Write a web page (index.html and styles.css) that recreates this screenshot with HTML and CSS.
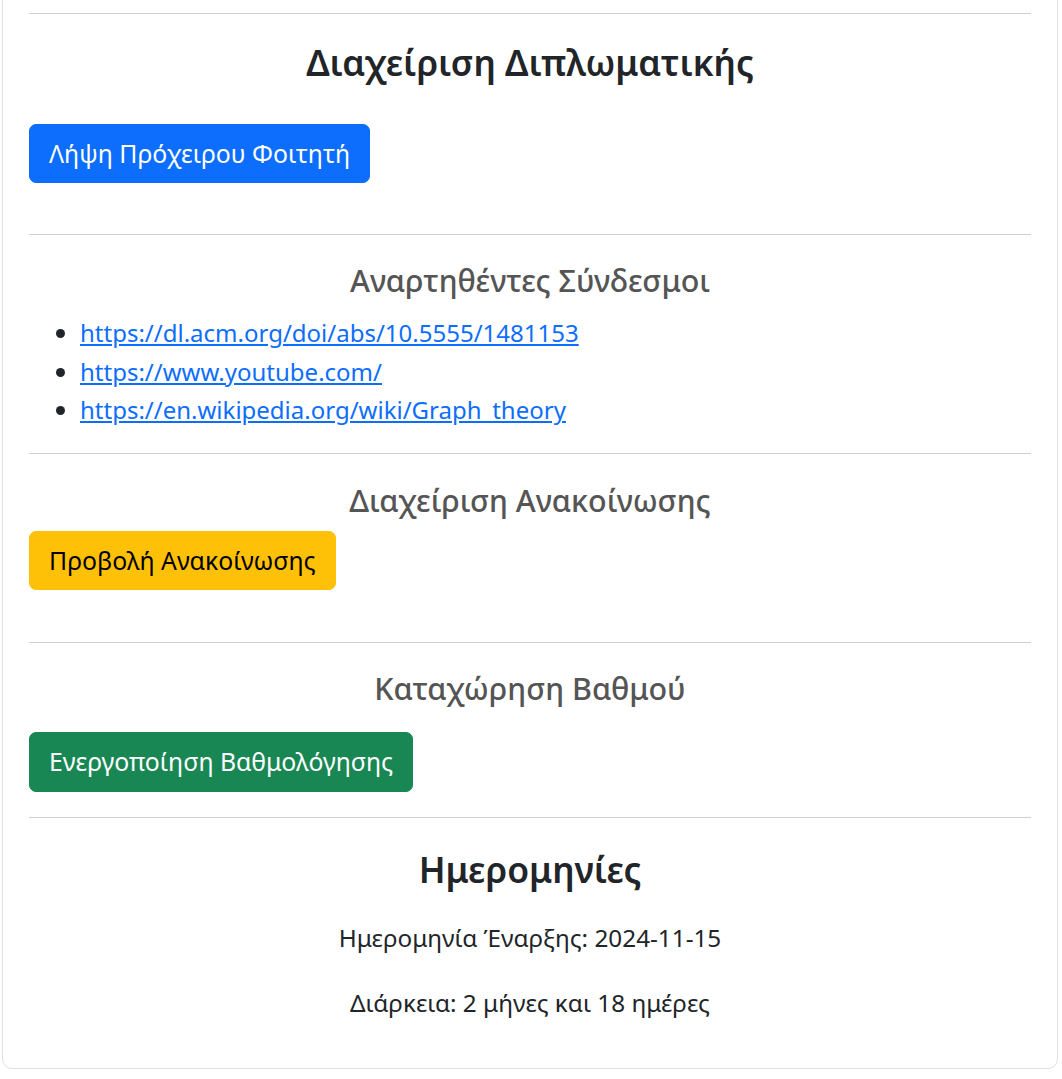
FILE: index.html
```html
<!DOCTYPE html>
<html lang="el">
<head>
<meta charset="utf-8">
<title>Διαχείριση Διπλωματικής</title>
<link rel="stylesheet" href="styles.css">
</head>
<body>
<div class="card">
  <hr class="rule">
  <h2 class="title title-top">Διαχείριση Διπλωματικής</h2>
  <div class="actions actions-draft"><button class="btn btn-blue">Λήψη Πρόχειρου Φοιτητή</button></div>
  <hr class="rule rule-draft">
  <h3 class="subtitle sub-links">Αναρτηθέντες Σύνδεσμοι</h3>
  <ul class="links">
    <li><a href="#">https://dl.acm.org/doi/abs/10.5555/1481153</a></li>
    <li><a href="#">https://www.youtube.com/</a></li>
    <li><a href="#">https://en.wikipedia.org/wiki/Graph_theory</a></li>
  </ul>
  <hr class="rule rule-links">
  <h3 class="subtitle sub-ann">Διαχείριση Ανακοίνωσης</h3>
  <div class="actions actions-ann"><button class="btn btn-yellow">Προβολή Ανακοίνωσης</button></div>
  <hr class="rule rule-ann">
  <h3 class="subtitle sub-grade">Καταχώρηση Βαθμού</h3>
  <div class="actions actions-grade"><button class="btn btn-green">Ενεργοποίηση Βαθμολόγησης</button></div>
  <hr class="rule rule-grade">
  <h2 class="title title-dates">Ημερομηνίες</h2>
  <p class="info info-first">Ημερομηνία Έναρξης: 2024-11-15</p>
  <p class="info info-second">Διάρκεια: 2 μήνες και 18 ημέρες</p>
</div>
</body>
</html>
```
FILE: styles.css
```css
html, body {
  margin: 0;
  padding: 0;
  background: #ffffff;
}
body {
  font-family: "Noto Sans", "Open Sans", sans-serif;
  color: #212529;
  font-size: 24px;
}
.card {
  margin: -40px 4px 10px 2px;
  border: 1px solid #dee0e2;
  border-radius: 10px;
  padding: 52px 26px 46px 26px;
  display: flex;
  flex-direction: column;
}
.rule {
  margin: 0;
  height: 0;
  border: 0;
  border-top: 1px solid #cfcfcf;
}
.rule-draft { margin-top: 51px; }
.rule-links { margin-top: 23px; }
.rule-ann { margin-top: 52px; }
.rule-grade { margin-top: 25px; }

.title {
  margin: 0;
  text-align: center;
  font-size: 35.5px;
  line-height: 46px;
  font-weight: 600;
  color: #212529;
}
.title-top { margin-top: 25px; }
.title-dates { margin-top: 28px; }

.subtitle {
  margin: 0;
  text-align: center;
  font-size: 30.5px;
  line-height: 38px;
  font-weight: 500;
  color: #555555;
}
.sub-links { margin-top: 26px; }
.sub-ann { margin-top: 27px; }
.sub-grade { margin-top: 26px; }

.actions { display: flex; }
.actions-draft { margin-top: 39px; }
.actions-ann { margin-top: 12px; }
.actions-grade { margin-top: 25px; }

.btn {
  font-family: inherit;
  font-size: 24.8px;
  height: 59px;
  padding: 0 19px;
  border: 1px solid transparent;
  border-radius: 7px;
  line-height: 57px;
  cursor: pointer;
}
.btn-blue { background: #0d6efd; border-color: #0d6efd; color: #ffffff; }
.btn-yellow { background: #ffc107; border-color: #ffc107; color: #000000; }
.btn-green { background: #198754; border-color: #198754; color: #ffffff; height: 60px; }

.links {
  margin: 15px 0 0 0;
  padding-left: 51px;
  line-height: 38.5px;
}
.links a {
  color: #0d6efd;
  text-decoration: underline;
}

.info {
  margin: 27px 0 0 0;
  text-align: center;
  line-height: 38px;
  font-size: 24.3px;
}
```
